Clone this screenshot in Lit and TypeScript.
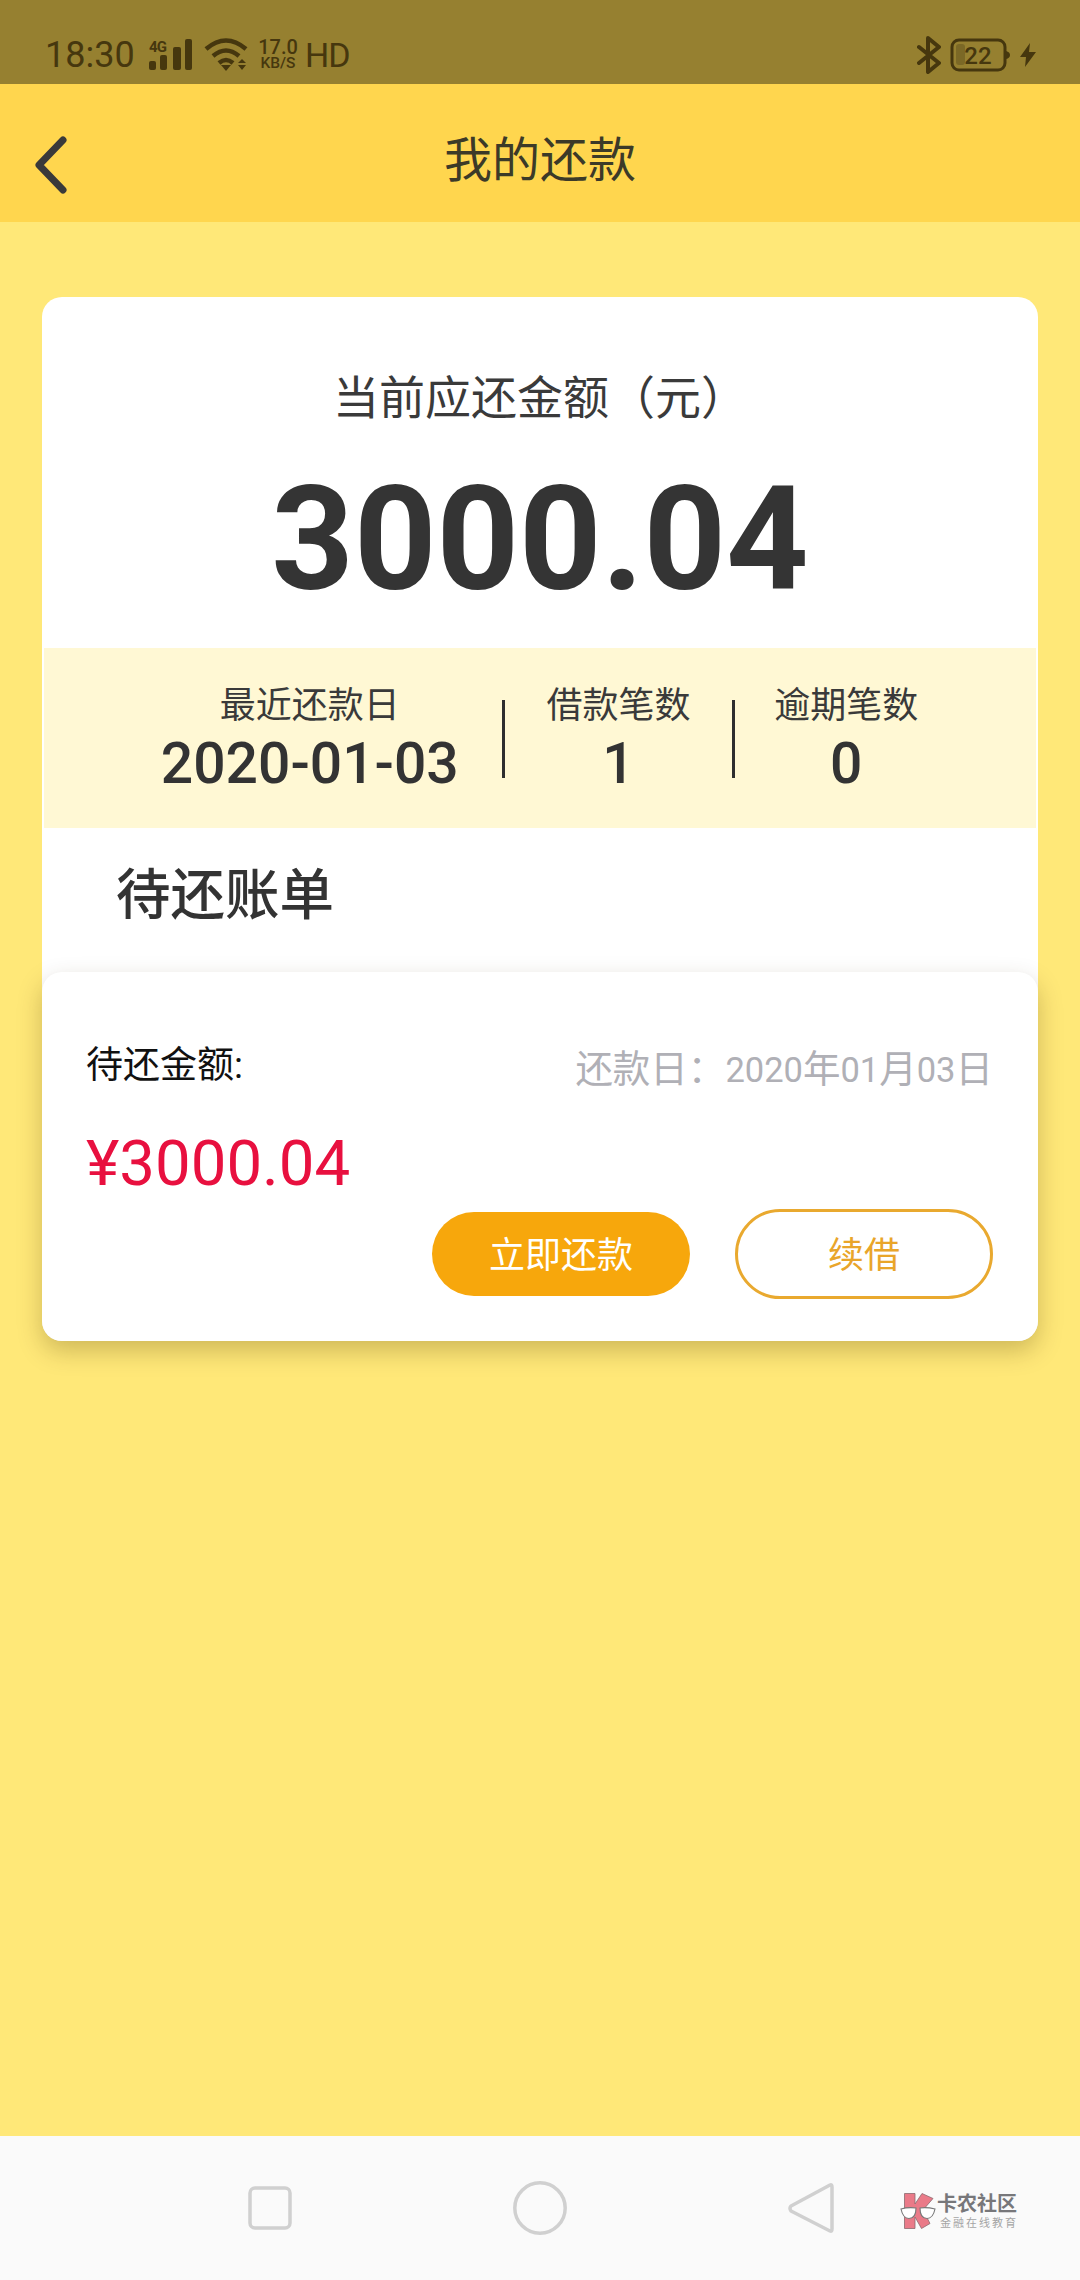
import { LitElement, html, css } from 'lit';
import { customElement } from 'lit/decorators.js';

@customElement('app-root')
export class AppRoot extends LitElement {
  static styles = css`
    :host {
      display: flex;
      flex-direction: column;
      width: 1080px;
      height: 2280px;
      overflow: hidden;
      position: relative;
      background: #ffe878;
      color: #333;
      font-family: Roboto, "Noto Sans CJK SC", sans-serif;
    }
    .status {
      height: 84px;
      flex: none;
      background: #968030;
      color: #46370e;
      display: flex;
      align-items: center;
      padding: 25px 44px 0 45px;
      box-sizing: border-box;
    }
    .time { font-size: 36px; width: 104px; }
    .signal { display: block; width: 44px; height: 32px; }
    .wifi { display: block; width: 44px; height: 34px; margin-left: 11px; }
    .speed {
      width: 42px;
      margin-left: 9px;
      font-weight: 500;
      text-align: center;
      display: flex;
      flex-direction: column;
    }
    .speed b { font-size: 20px; line-height: 18px; font-weight: 500; }
    .speed i { font-size: 15.5px; line-height: 15px; font-style: normal; white-space: nowrap; }
    .hd { font-size: 34px; margin-left: 6px; letter-spacing: -1px; }
    .status .right { margin-left: auto; display: flex; align-items: center; }
    .bt { display: block; width: 24px; height: 38px; }
    .battery { display: block; width: 60px; height: 34px; margin-left: 9px; }
    .bolt { display: block; width: 16px; height: 24px; margin-left: 10px; }

    .header {
      height: 138px;
      flex: none;
      background: #ffd64e;
      display: flex;
      align-items: center;
      justify-content: center;
      position: relative;
      font-size: 48px;
      color: #3c3a28;
      padding-top: 5px;
      box-sizing: border-box;
    }
    .back { position: absolute; left: 34px; top: 52px; width: 34px; height: 58px; }

    .main { flex: 1; padding: 75px 42px 0; box-sizing: border-box; }
    .card {
      background: #fff;
      border-radius: 20px;
      display: flex;
      flex-direction: column;
    }
    .due-label {
      margin-top: 71px;
      text-align: center;
      font-size: 46px;
      line-height: 60px;
      color: #3a3a3a;
    }
    .due {
      margin-top: 32px;
      text-align: center;
      font-size: 144px;
      font-weight: 700;
      line-height: 160px;
      color: #343434;
    }
    .strip {
      margin: 28px 2px 0;
      padding: 33px 79px 31px 74px;
      background: #fff8d4;
      display: flex;
      align-items: center;
    }
    .col { text-align: center; }
    .col.a { width: 384px; }
    .col.b { width: 228px; }
    .col.c { width: 222px; }
    .col span { display: block; font-size: 36px; line-height: 50px; color: #3a3a3a; }
    .col strong { display: block; font-size: 57px; line-height: 66px; font-weight: 500; color: #333; }
    .divider { width: 3px; height: 78px; background: #2e2e2e; flex: none; }
    .section {
      margin: 27px 0 37px 74px;
      font-size: 54.5px;
      font-weight: 500;
      line-height: 80px;
      color: #333;
    }
    .bill {
      background: #fff;
      border-radius: 20px;
      box-shadow: 0 10px 24px rgba(70, 50, 0, 0.26);
      padding: 68px 45px 42px 44px;
    }
    .bill-top { display: flex; justify-content: space-between; align-items: center; height: 50px; }
    .bill-label { font-size: 37px; color: #111; margin-top: -6px; }
    .bill-date { font-size: 37.5px; color: #b0b0b6; }
    .bill-date .num { font-size: 34.5px; }
    .bill-amount { margin-top: 34px; font-size: 63.5px; line-height: 80px; color: #e8103f; }
    .actions { margin-top: 5px; display: flex; justify-content: flex-end; align-items: center; gap: 45px; }
    .btn {
      box-sizing: border-box;
      width: 258px;
      display: flex;
      align-items: center;
      justify-content: center;
      border-radius: 45px;
      font-size: 36px;
      padding-bottom: 5px;
    }
    .btn.pay { height: 84px; background: #f7a70c; color: #fff; }
    .btn.renew { height: 90px; border: 3px solid #e9a92f; color: #e9a52a; }

    .nav {
      height: 144px;
      flex: none;
      background: #fafafa;
      display: flex;
      align-items: center;
      gap: 221px;
      padding-left: 248px;
      box-sizing: border-box;
      position: relative;
    }
    .nav svg { display: block; flex: none; }
    .mark {
      position: absolute;
      left: 900px;
      top: 57px;
      display: flex;
      align-items: flex-start;
    }
    .mark svg { width: 37px; height: 37px; }
    .mark-text { display: flex; flex-direction: column; }
    .mark-text b { font-size: 20px; line-height: 22px; font-weight: 700; color: #77777a; white-space: nowrap; }
    .mark-text i { font-size: 11px; line-height: 14px; font-style: normal; letter-spacing: 2px; color: #a5a5a5; white-space: nowrap; margin-top: 2px; padding-left: 3px; }
  `;

  render() {
    return html`
      <div class="status">
        <div class="time">18:30</div>
        <svg class="signal" viewBox="0 0 44 32">
          <text x="0" y="13" font-size="15" font-weight="700" font-family="Roboto" fill="#46370e" textLength="18">4G</text>
          <rect x="0" y="22" width="7" height="9" rx="2" fill="#46370e" />
          <rect x="11" y="16" width="7" height="15" rx="2" fill="#46370e" />
          <rect x="24" y="8" width="8" height="23" rx="2" fill="#46370e" />
          <rect x="36" y="0" width="7" height="31" rx="2" fill="#46370e" />
        </svg>
        <svg class="wifi" viewBox="0 0 44 34" fill="none" stroke="#46370e" stroke-width="4.5">
          <path d="M2 11 Q22 -6 42 11" />
          <path d="M9 18 Q22 7 35 18" />
          <path d="M15 25 Q22 19 29 25" />
          <path d="M17 27 L27 27 L22 33 Z" fill="#46370e" stroke="none" />
          <path d="M34 25 L42 25 L38 21 Z M34 27 L42 27 L38 32 Z" fill="#46370e" stroke="none" />
        </svg>
        <div class="speed"><b>17.0</b><i>KB/S</i></div>
        <div class="hd">HD</div>
        <div class="right">
          <svg class="bt" viewBox="0 0 24 38" fill="none" stroke="#46370e" stroke-width="4" stroke-linejoin="round" stroke-linecap="round">
            <path d="M2 11 L22 27 L11 36 L11 2 L22 11 L2 27" />
          </svg>
          <svg class="battery" viewBox="0 0 60 34">
            <rect x="2" y="2" width="53" height="30" rx="7" fill="none" stroke="#46370e" stroke-width="3" />
            <rect x="6" y="6" width="9" height="21" rx="3" fill="#7b6826" />
            <path d="M56 13 Q60 14 60 17 Q60 20 56 21 Z" fill="#46370e" />
            <text x="28" y="26" text-anchor="middle" font-size="24" font-weight="500" font-family="Roboto" fill="#46370e">22</text>
          </svg>
          <svg class="bolt" viewBox="0 0 16 24"><path d="M10 0 L0 14 L6 14 L5 24 L16 9 L9 9 Z" fill="#46370e" /></svg>
        </div>
      </div>

      <div class="header">
        <svg class="back" viewBox="0 0 34 58" fill="none" stroke="#3a3a3a" stroke-width="7" stroke-linecap="round" stroke-linejoin="round">
          <path d="M29 4 L5 29 L29 54" />
        </svg>
        我的还款
      </div>

      <div class="main">
        <div class="card">
          <div class="due-label">当前应还金额（元）</div>
          <div class="due">3000.04</div>
          <div class="strip">
            <div class="col a"><span>最近还款日</span><strong>2020-01-03</strong></div>
            <div class="divider"></div>
            <div class="col b"><span>借款笔数</span><strong>1</strong></div>
            <div class="divider"></div>
            <div class="col c"><span>逾期笔数</span><strong>0</strong></div>
          </div>
          <div class="section">待还账单</div>
          <div class="bill">
            <div class="bill-top">
              <div class="bill-label">待还金额:</div>
              <div class="bill-date">还款日：<span class="num">2020</span>年<span class="num">01</span>月<span class="num">03</span>日</div>
            </div>
            <div class="bill-amount">¥3000.04</div>
            <div class="actions">
              <div class="btn pay">立即还款</div>
              <div class="btn renew">续借</div>
            </div>
          </div>
        </div>
      </div>

      <div class="nav">
        <svg width="44" height="44" viewBox="0 0 44 44"><rect x="2" y="2" width="40" height="40" rx="5" fill="none" stroke="#d0d0d0" stroke-width="3.5" /></svg>
        <svg width="54" height="54" viewBox="0 0 54 54"><circle cx="27" cy="27" r="25.2" fill="none" stroke="#d0d0d0" stroke-width="3.5" /></svg>
        <svg width="46" height="52" viewBox="0 0 46 52"><path d="M42 3 Q44 2 44 5 L44 47 Q44 50 42 49 L3 29 Q1 26 3 24 Z" fill="none" stroke="#d0d0d0" stroke-width="3.5" stroke-linejoin="round" /></svg>
        <div class="mark">
          <svg viewBox="0 0 37 37">
            <path d="M4.5 0.5 L15 0.5 L15 11 L22 0.5 L33 5.5 L23 17 L30 30.5 L21.5 35.5 L15 24 L15 35.5 L4.5 35.5 Z" fill="#ea7a88" stroke="#8b6a6e" stroke-width="0.8" />
            <path d="M1 16 Q8 14 16 15 Q16 25.5 9 25.5 Q3 25.5 1 16 Z" fill="#fff" stroke="#777" stroke-width="1.1" />
            <path d="M20 15 Q27 14 35 16 Q33 25.5 27 25.5 Q20 25.5 20 15 Z" fill="#fff" stroke="#777" stroke-width="1.1" />
          </svg>
          <div class="mark-text"><b>卡农社区</b><i>金融在线教育</i></div>
        </div>
      </div>
    `;
  }
}
